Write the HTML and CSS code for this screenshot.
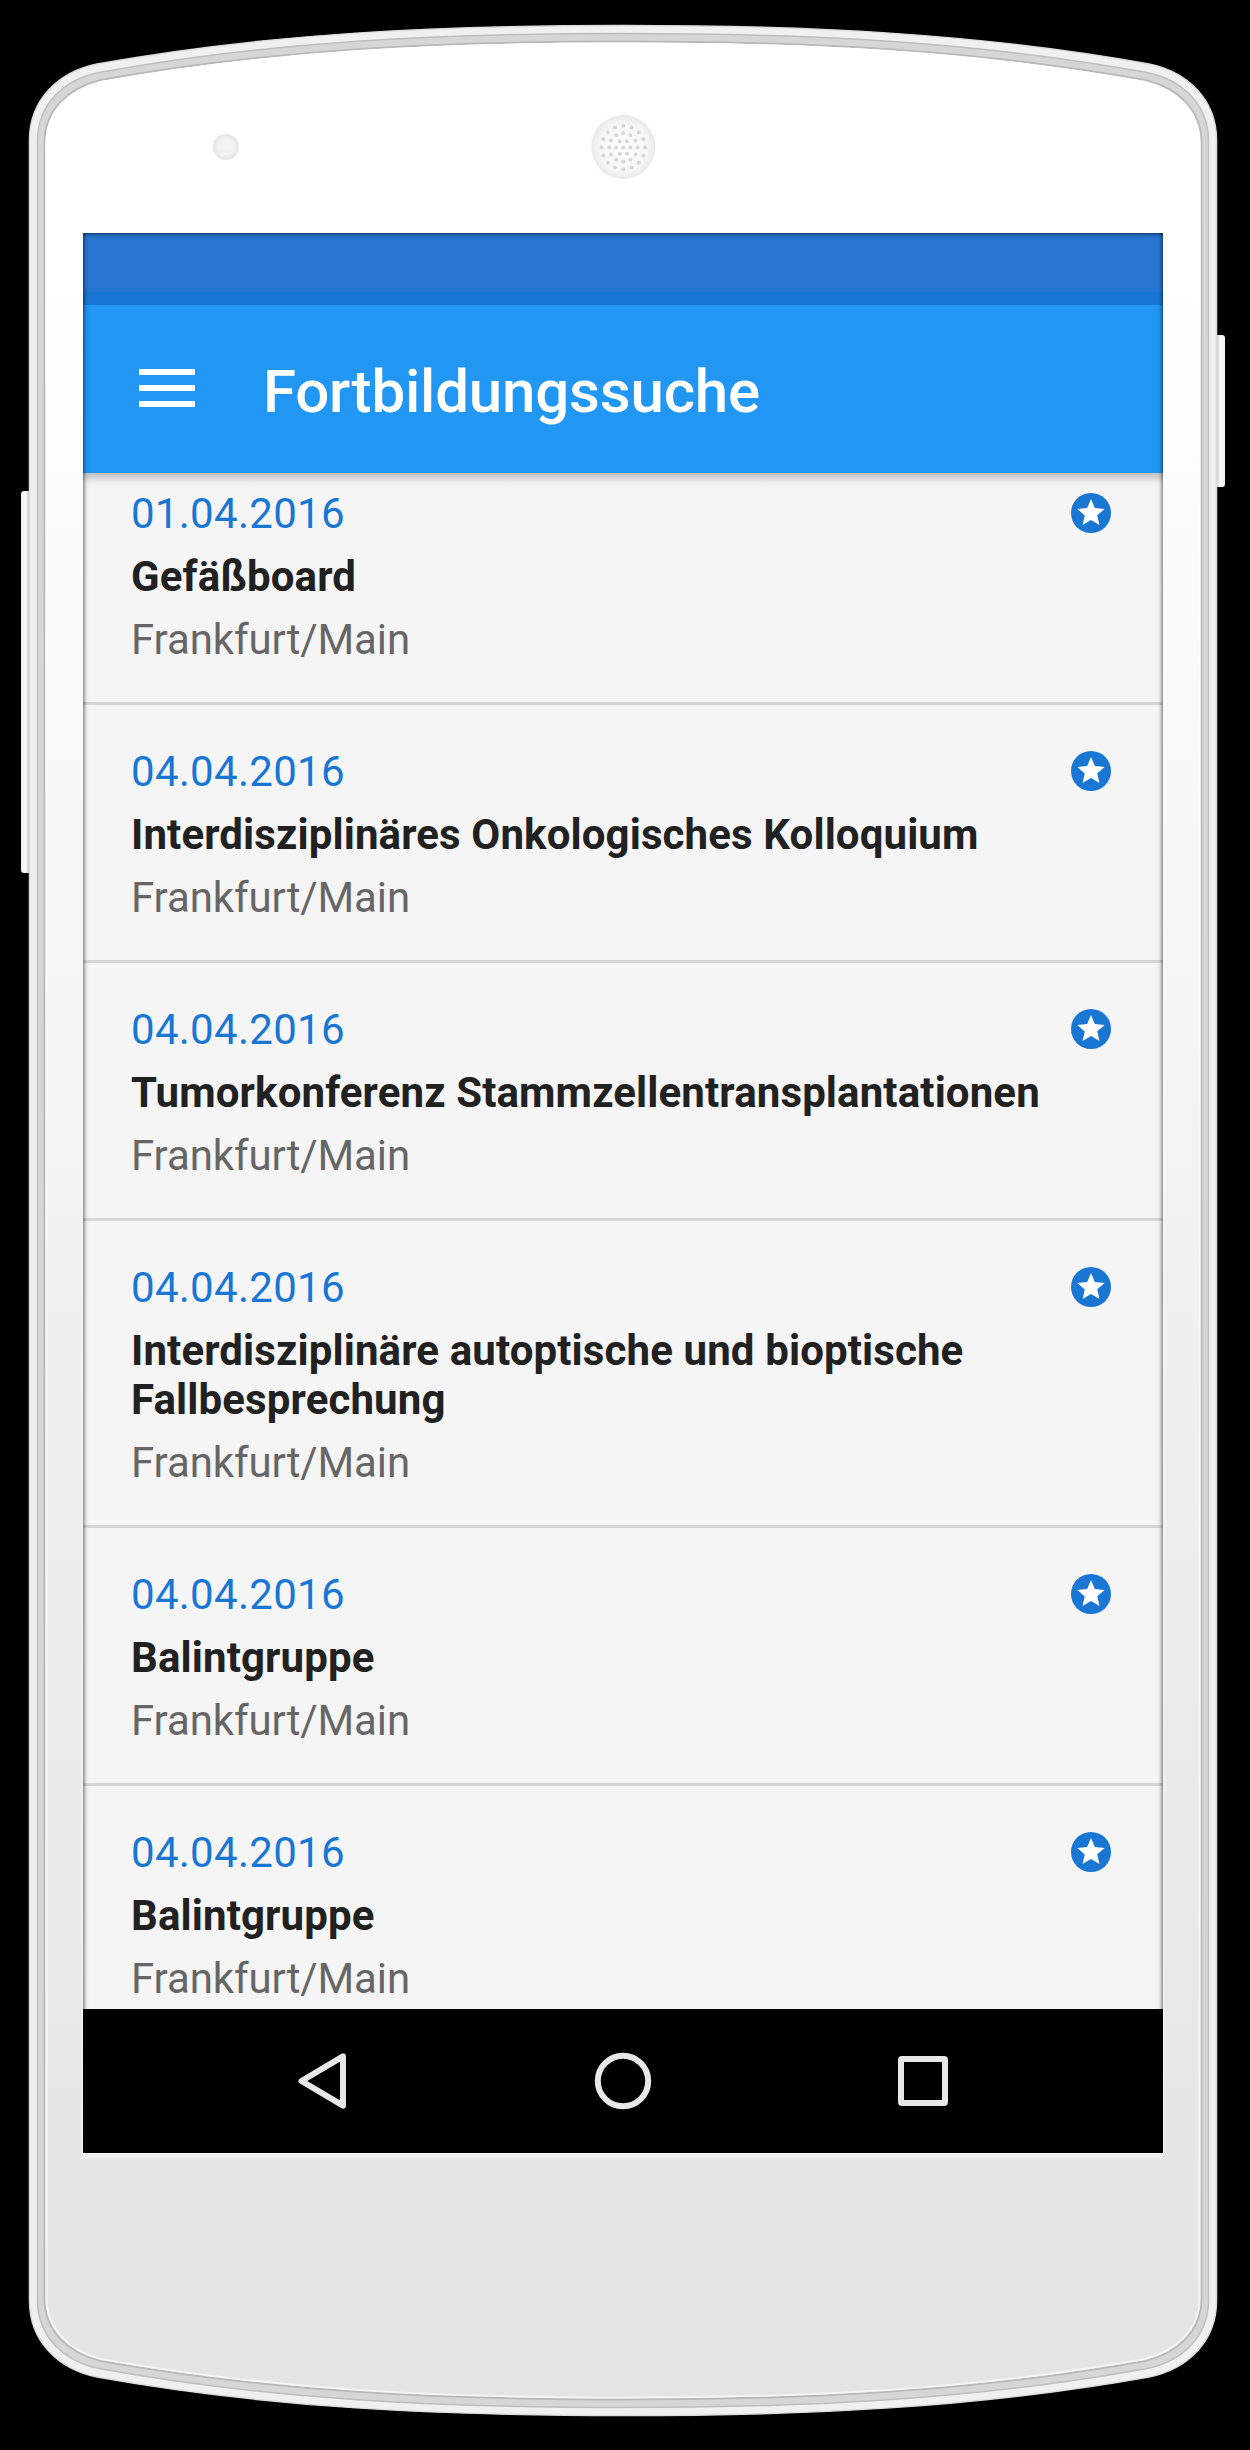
FILE: index.html
```html
<!DOCTYPE html>
<html lang="de">
<head>
<meta charset="utf-8">
<title>Fortbildungssuche</title>
<link rel="stylesheet" href="styles.css">
</head>
<body>
<div class="phone">
  <svg class="frame" viewBox="0 0 1250 2450" aria-hidden="true">
    <defs>
      <linearGradient id="face" x1="0" y1="0" x2="0" y2="1">
        <stop offset="0" stop-color="#fff"/>
        <stop offset=".15" stop-color="#fdfdfd"/>
        <stop offset=".35" stop-color="#f7f7f7"/>
        <stop offset=".46" stop-color="#f3f3f3"/>
        <stop offset=".62" stop-color="#ededed"/>
        <stop offset=".88" stop-color="#e6e6e6"/>
        <stop offset="1" stop-color="#e4e4e4"/>
      </linearGradient>
      <linearGradient id="lip" gradientUnits="userSpaceOnUse" x1="0" y1="41" x2="0" y2="2400">
        <stop offset="0" stop-color="#fff"/>
        <stop offset="1" stop-color="#f4f4f4"/>
      </linearGradient>
      <radialGradient id="lens">
        <stop offset="0" stop-color="#f5f5f5"/>
        <stop offset=".6" stop-color="#f1f1f1"/>
        <stop offset="1" stop-color="#e4e4e4"/>
      </radialGradient>
      <radialGradient id="grille">
        <stop offset="0" stop-color="#fdfdfd"/>
        <stop offset=".75" stop-color="#f6f6f6"/>
        <stop offset="1" stop-color="#e9e9e9"/>
      </radialGradient>
      <linearGradient id="keyLeft">
        <stop offset="0" stop-color="#f0f0f0"/>
        <stop offset=".4" stop-color="#fbfbfb"/>
        <stop offset=".6" stop-color="#cfcfcf"/>
        <stop offset="1" stop-color="#c8c8c8"/>
      </linearGradient>
      <linearGradient id="keyRight">
        <stop offset="0" stop-color="#c8c8c8"/>
        <stop offset=".4" stop-color="#dadada"/>
        <stop offset=".6" stop-color="#fafafa"/>
        <stop offset="1" stop-color="#f4f4f4"/>
      </linearGradient>
    </defs>
    <rect x="21" y="491" width="12" height="382" rx="3" fill="url(#keyLeft)"/>
    <rect x="1213" y="335" width="12" height="152" rx="3" fill="url(#keyRight)"/>
    <path class="rim" d="M29.500 140C29.500 100 58 72 97 64C270 33 440 25.500 623 25.500S976 33 1149 64C1188 72 1216.500 100 1216.500 140V2301C1216.500 2341 1188 2369 1149 2377C976 2408 806 2415.500 623 2415.500S270 2408 97 2377C58 2369 29.500 2341 29.500 2301Z"/>
    <path class="groove" d="M37.500 141C37.500 105 63 80 99 72.500C272 41 440 33.500 623 33.500S974 41 1147 72.500C1183 80 1208.500 105 1208.500 141V2300C1208.500 2336 1183 2361 1147 2368.500C974 2400 806 2407.500 623 2407.500S272 2400 99 2368.500C63 2361 37.500 2336 37.500 2300Z"/>
    <path class="face" d="M44.500 143C44.500 110 68 88 101 80C274 49 440 41.500 623 41.500S972 49 1145 80C1178 88 1201.500 110 1201.500 143V2298C1201.500 2331 1178 2353 1145 2361C972 2392 806 2399.500 623 2399.500S274 2392 101 2361C68 2353 44.500 2331 44.500 2298Z"/>
    <path class="lip" d="M46.500 143C46.500 111 70 90 101 82C274 51 440 43.500 623 43.500S972 51 1145 82C1176 90 1199.500 111 1199.500 143V2298C1199.500 2330 1176 2351 1145 2359C972 2390 806 2397.500 623 2397.500S274 2390 101 2359C70 2351 46.500 2330 46.500 2298Z"/>
    <circle cx="226" cy="147" r="13" fill="url(#lens)"/>
    <circle cx="623.300" cy="147" r="32" fill="url(#grille)"/>
    <circle class="hole" cx="623.300" cy="147.500" r="2"/>
    <circle class="holes" cx="623.300" cy="147.500" r="7.200" pathLength="6" />
    <circle class="holes" cx="623.300" cy="147.500" r="14.200" pathLength="12"/>
    <circle class="holes" cx="623.300" cy="147.500" r="21.700" pathLength="16"/>
  </svg>

  <main class="screen">
    <div class="statusbar"></div>
    <header class="appbar">
      <span class="menu"><i></i><i></i><i></i></span>
      <h1 class="title">Fortbildungssuche</h1>
    </header>
    <section class="list">
      <article class="row">
        <div class="text"><p class="date">01.04.2016</p><h2 class="name">Gefäßboard</h2><p class="place">Frankfurt/Main</p></div>
        <svg class="star" viewBox="0 0 24 24"><use href="#star"/></svg>
      </article>
      <article class="row">
        <div class="text"><p class="date">04.04.2016</p><h2 class="name">Interdisziplinäres Onkologisches Kolloquium</h2><p class="place">Frankfurt/Main</p></div>
        <svg class="star" viewBox="0 0 24 24"><use href="#star"/></svg>
      </article>
      <article class="row">
        <div class="text"><p class="date">04.04.2016</p><h2 class="name">Tumorkonferenz Stammzellentransplantationen</h2><p class="place">Frankfurt/Main</p></div>
        <svg class="star" viewBox="0 0 24 24"><use href="#star"/></svg>
      </article>
      <article class="row">
        <div class="text"><p class="date">04.04.2016</p><h2 class="name">Interdisziplinäre autoptische und bioptische Fallbesprechung</h2><p class="place">Frankfurt/Main</p></div>
        <svg class="star" viewBox="0 0 24 24"><use href="#star"/></svg>
      </article>
      <article class="row">
        <div class="text"><p class="date">04.04.2016</p><h2 class="name">Balintgruppe</h2><p class="place">Frankfurt/Main</p></div>
        <svg class="star" viewBox="0 0 24 24"><use href="#star"/></svg>
      </article>
      <article class="row">
        <div class="text"><p class="date">04.04.2016</p><h2 class="name">Balintgruppe</h2><p class="place">Frankfurt/Main</p></div>
        <svg class="star" viewBox="0 0 24 24"><use href="#star"/></svg>
      </article>
    </section>
    <nav class="navbar">
      <svg class="key" viewBox="0 0 60 60"><path d="M50 5.300V54.700L8.500 30Z"/></svg>
      <svg class="key" viewBox="0 0 60 60"><circle cx="30" cy="30" r="25.200"/></svg>
      <svg class="key" viewBox="0 0 60 60"><rect x="8" y="8" width="44" height="44" rx="1"/></svg>
    </nav>
  </main>
</div>
<svg class="symbols" aria-hidden="true">
  <symbol id="star" viewBox="0 0 24 24">
    <circle cx="12" cy="12" r="10" fill="#1976d2"/>
    <path fill="#fff" d="M16.230 18L12 15.450 7.770 18l1.120-4.810-3.730-3.230 4.920-.42L12 5l1.920 4.530 4.920.42-3.730 3.230L16.230 18z"/>
  </symbol>
</svg>
</body>
</html>
```
FILE: styles.css
```css
* { box-sizing: border-box; margin: 0; padding: 0; }

body {
  width: 1250px;
  height: 2450px;
  overflow: hidden;
  background: #000;
  font-family: Roboto, "Liberation Sans", sans-serif;
}

.symbols { position: absolute; width: 0; height: 0; }

.phone {
  position: relative;
  height: 2450px;
  padding: 233px 87px 0 83px;
}

.frame { position: absolute; inset: 0; width: 1250px; height: 2450px; }
.rim { fill: #f0f0f0; stroke: #dcdcdc; stroke-width: 1.5; }
.groove { fill: #d6d6d6; stroke: #bebebe; stroke-width: 1.5; }
.face { fill: url(#face); stroke: #b9b9b9; stroke-width: 2; }
.lip { fill: none; stroke: url(#lip); stroke-width: 2; }
.hole { fill: #d6d6d6; }
.holes {
  fill: none;
  stroke: #d6d6d6;
  stroke-width: 4;
  stroke-linecap: round;
  stroke-dasharray: 0 1;
}

.screen {
  position: relative;
  display: flex;
  flex-direction: column;
  width: 1080px;
  height: 1920px;
  background: #f5f5f5;
  box-shadow: 0 0 2px 1px rgba(255, 255, 255, .7), 0 5px 2px rgba(255, 255, 255, .4);
}

/* recessed edge of the glass */
.screen::after {
  content: "";
  position: absolute;
  inset: 0;
  z-index: 2;
  box-shadow: inset 0 0 5px rgba(0, 0, 0, .9);
  pointer-events: none;
}

.statusbar {
  height: 72px;
  background: linear-gradient(#2775d2 59px, #1976d5 59px);
}

.appbar {
  position: relative;
  z-index: 1;
  display: flex;
  align-items: center;
  gap: 68px;
  height: 168px;
  padding-left: 56px;
  background: #2196f3;
}

/* shadow cast on the list */
.appbar::after {
  content: "";
  position: absolute;
  top: 100%;
  left: 0;
  right: 0;
  height: 14px;
  background: linear-gradient(rgba(0, 0, 0, .22), rgba(0, 0, 0, .12) 5px, rgba(0, 0, 0, .04) 9px, transparent);
}

.menu { display: flex; flex-direction: column; gap: 10px; width: 56px; padding-bottom: 2px; }
.menu i { height: 6px; background: #fff; }

.title { font-size: 60px; line-height: 70px; font-weight: 500; letter-spacing: -.18px; color: #fff; padding-top: 5px; }

.list { flex: 1; min-height: 0; overflow: hidden; background: #f5f5f5; }

.row {
  display: flex;
  justify-content: space-between;
  align-items: flex-start;
  padding: 42px 48px 38px;
  border-bottom: 3px solid #d5d5d5;
}
.row:first-child { margin-top: -26px; }

.text { display: flex; flex-direction: column; gap: 14px; width: 920px; font-size: 42px; line-height: 49px; }
.date { color: #1976d2; letter-spacing: .28px; }
.name { font-size: inherit; font-weight: 700; letter-spacing: .12px; color: #212121; }
.place { color: #666; letter-spacing: -.1px; }
.star { width: 48px; height: 48px; flex: none; }

.navbar {
  position: relative;
  z-index: 3;
  display: flex;
  justify-content: center;
  align-items: center;
  gap: 240px;
  height: 144px;
  background: #000;
}
.key { width: 60px; height: 60px; fill: none; stroke: #e8e8e8; stroke-width: 6; stroke-linejoin: round; }
```
